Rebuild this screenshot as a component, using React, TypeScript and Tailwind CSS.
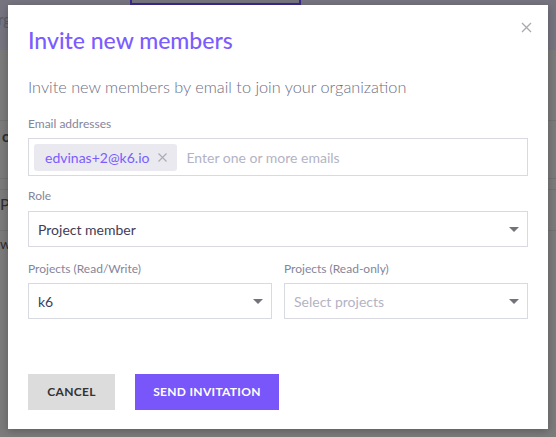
import { useState } from 'react'

function Caret() {
  return (
    <svg width="10" height="5" viewBox="0 0 10 5" className="shrink-0">
      <path d="M0 0 L10 0 L5 5 Z" fill="#737379" />
    </svg>
  )
}

function Select({ value, placeholder }: { value?: string; placeholder?: string }) {
  return (
    <div className="flex h-[36px] items-center justify-between border border-[#d9d9e1] bg-white pl-[9px] pr-[8px]">
      {value ? (
        <span className="text-[14px] text-[#3f3d56]">{value}</span>
      ) : (
        <span className="text-[14px] text-[#b3b3c4]">{placeholder}</span>
      )}
      <Caret />
    </div>
  )
}

export default function App() {
  const [emails] = useState(['edvinas+2@k6.io'])
  return (
    <div className="relative h-[437px] w-[556px] overflow-hidden bg-[#7b7b7b] font-['Lato',sans-serif]">
      {/* obscured page behind the overlay */}
      <div className="flex h-[50px] items-start bg-[#76747f]">
        <span className="ml-[-2px] mt-[8px] text-[15px] text-[#5b5a66]">rg</span>
        <div className="ml-[119px] h-[5px] w-[171px] border-x-2 border-b-2 border-[#3b2a8a]" />
      </div>
      <div className="mt-[70px] border-t border-[#727272] pt-[4px] pl-[2px] text-[15px] font-bold text-[#2f2f2f]">o</div>
      <div className="mt-[30px] border-t border-[#727272]" />
      <div className="mt-[10px] border-t border-[#727272] pt-[2px] text-[16px] text-[#2f2f2f]">P</div>
      <div className="mt-[14px] border-t border-[#727272] pt-[2px] text-[14px] text-[#2f2f2f]">w</div>

      {/* modal */}
      <div className="absolute left-[8px] top-[5px] h-[424px] w-[540px] bg-white shadow-[0_2px_8px_rgba(0,0,0,0.25)]">
        <button className="absolute right-[16px] top-[17px] text-[#a9a9b0]">
          <svg width="11" height="11" viewBox="0 0 11 11">
            <path d="M1 1 L10 10 M10 1 L1 10" stroke="currentColor" strokeWidth="1.3" />
          </svg>
        </button>
        <div className="flex flex-col px-[20px] pt-[22px]">
          <h1 className="text-[23px] font-medium leading-[26px] text-[#7b5cff]">Invite new members</h1>
          <p className="mt-[24px] text-[16.3px] font-light leading-[20px] text-[#6e6e84]">
            Invite new members by email to join your organization
          </p>

          <label className="mt-[20px] text-[12px] leading-[14px] text-[#85859b]">Email addresses</label>
          <div className="mt-[7px] flex h-[38px] items-center gap-[9px] border border-[#d9d9e1] pl-[5px]">
            {emails.map(e => (
              <span key={e} className="flex h-[27px] items-center gap-[9px] rounded-[3px] bg-[#e9e9ef] pl-[11px] pr-[10px] text-[14px] text-[#7b5cff]">
                {e}
                <svg width="9" height="9" viewBox="0 0 9 9">
                  <path d="M0.5 0.5 L8.5 8.5 M8.5 0.5 L0.5 8.5" stroke="#acacb5" strokeWidth="1.2" />
                </svg>
              </span>
            ))}
            <span className="text-[14px] text-[#b3b3c4]">Enter one or more emails</span>
          </div>

          <label className="mt-[13px] text-[12px] leading-[14px] text-[#85859b]">Role</label>
          <div className="mt-[8px]">
            <Select value="Project member" />
          </div>

          <div className="mt-[15px] grid grid-cols-2 gap-[12px]">
            <div className="flex flex-col">
              <label className="text-[12px] leading-[14px] text-[#85859b]">Projects (Read/Write)</label>
              <div className="mt-[7px]">
                <Select value="k6" />
              </div>
            </div>
            <div className="flex flex-col">
              <label className="text-[12px] leading-[14px] text-[#85859b]">Projects (Read-only)</label>
              <div className="mt-[7px]">
                <Select placeholder="Select projects" />
              </div>
            </div>
          </div>

          <div className="mt-[55px] flex gap-[20px]">
            <button className="h-[36px] w-[87px] bg-[#dcdcdc] text-[12px] font-bold tracking-[0.3px] text-[#333333]">CANCEL</button>
            <button className="h-[36px] w-[144px] bg-[#7856fa] text-[12px] font-bold tracking-[0.3px] text-white">SEND INVITATION</button>
          </div>
        </div>
      </div>
    </div>
  )
}
